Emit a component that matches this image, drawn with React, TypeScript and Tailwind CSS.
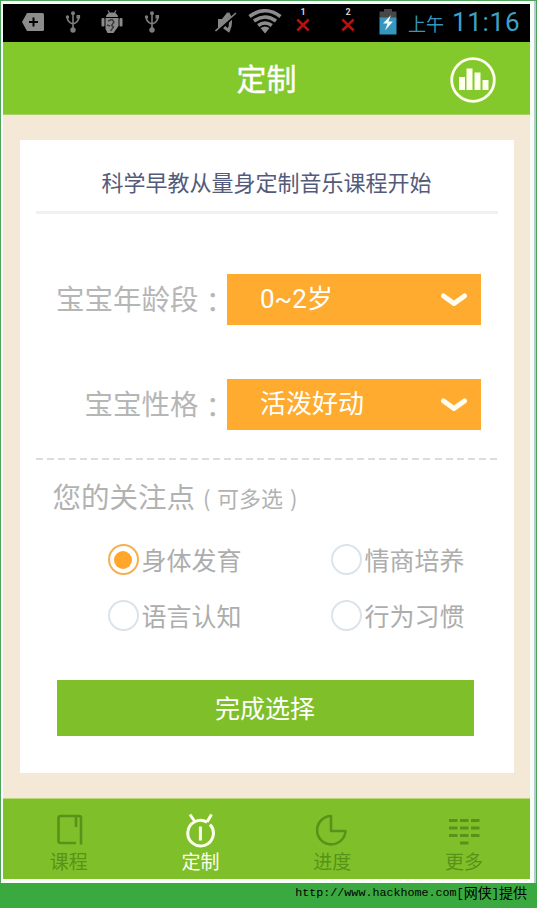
import { useState } from "react"
import type { ReactNode } from "react"

const concerns = ["身体发育", "情商培养", "语言认知", "行为习惯"]

function UsbIcon() {
  return (
    <svg width="16" height="24" viewBox="0 0 16 24" fill="none" stroke="#7d7d7d" strokeWidth="1.6">
      <path d="M8 3v16M2.200 7q0 5 5.800 7 5.800-2 5.800-7" />
      <circle cx="8" cy="3.200" r="2" fill="#7d7d7d" stroke="none" />
      <circle cx="8" cy="20" r="2.700" fill="#7d7d7d" stroke="none" />
      <circle cx="2.500" cy="7" r="1.700" fill="#7d7d7d" stroke="none" />
      <path d="M11.500 5h3.600v3.600h-3.600z" fill="#7d7d7d" stroke="none" />
    </svg>
  )
}

function DebugIcon() {
  return (
    <svg width="22" height="24" viewBox="0 0 22 24" fill="#8a8a8a">
      <path d="M5 7C5.300 3.700 8 2.500 11 2.500S16.700 3.700 17 7z" />
      <path d="M7 0.500l1.500 2.500M15 0.500l-1.500 2.500" stroke="#8a8a8a" strokeWidth="1.200" />
      <path d="M4.500 8h13v8l-5 7H6.500l-2-4z" />
      <rect x="0.500" y="8" width="3" height="8.500" rx="1" />
      <rect x="18.500" y="8" width="3" height="8.500" rx="1" />
      <path d="M7 11l4-1.500 2 2.500-2.500 3.500 2 1.500-3 4M6 15l3 1" stroke="#3c3c3c" strokeWidth="1.500" fill="none" />
    </svg>
  )
}

function NoSim({ slot }: { slot: number }) {
  return (
    <div className="mb-1 flex w-[14px] flex-col items-center">
      <span className="h-[9px] text-[9px] leading-[9px] font-bold text-[#d2d2d2]">{slot}</span>
      <svg width="14" height="14" viewBox="0 0 14 14" className="mt-px" stroke="#b5120f" strokeWidth="2.6">
        <path d="M1.300 1.500l11.400 11M12.700 1.500L1.300 12.500" />
      </svg>
    </div>
  )
}

function StatusBar() {
  return (
    <div className="flex h-[38px] items-center bg-black pb-[3px] pl-[19px] font-[Roboto,'Noto_Sans_CJK_SC',sans-serif]">
      <svg width="22" height="18" viewBox="0 0 22 18">
        <path d="M5 0h15.500q1.500 0 1.500 1.500v15q0 1.500-1.500 1.500H5L0 9z" fill="#8c8c8c" />
        <path d="M11.500 4.500v9M7 9h9" stroke="#000" strokeWidth="2" />
      </svg>
      <div className="ml-[21px]"><UsbIcon /></div>
      <div className="ml-[20px]"><DebugIcon /></div>
      <div className="ml-[21px]"><UsbIcon /></div>
      <svg width="22" height="24" viewBox="0 0 22 24" className="ml-[55px]" fill="#858585">
        <path d="M3 9h4l5.500-7L14 9l-7 9H3z" />
        <path d="M13 3q5 8 0.500 17.500L9 17" fill="none" stroke="#858585" strokeWidth="3" />
        <path d="M1 22.500L21.500 4" stroke="#000" strokeWidth="2.500" />
        <path d="M0.500 21L21 3" stroke="#858585" strokeWidth="1.600" />
      </svg>
      <svg width="34" height="25" viewBox="0 0 34 25" className="ml-[11px]" fill="none" stroke="#8c8c8c" strokeWidth="3.600">
        <path d="M1.500 7.500Q17-4 32.500 7.500M6 12Q17 4 28 12M10.200 16.500Q17 11.500 23.800 16.500" />
        <path d="M12.500 19Q17 15.800 21.500 19L17 24.500z" fill="#8c8c8c" stroke="none" />
      </svg>
      <div className="ml-[14px]"><NoSim slot={1} /></div>
      <div className="ml-[31px]"><NoSim slot={2} /></div>
      <svg width="18" height="26" viewBox="0 0 18 26" className="ml-[24px]">
        <path d="M5 0h8v2.500h4.500V9H0.500V2.500H5z" fill="#474747" />
        <path d="M0.500 8.500h17V25.500H0.500z" fill="#3597be" />
        <path d="M12 6L4 14.500h4.500L6 21.500 14 12.500H9.500z" fill="#f2f8f8" />
      </svg>
      <span className="mt-1.5 ml-[11px] text-[18px] leading-none text-[#3597be]">上午</span>
      <span className="ml-[8px] text-[26px] leading-none tracking-[0.7px] text-[#3fa0c6]">11:16</span>
    </div>
  )
}

function Header() {
  return (
    <header className="grid h-[73px] grid-cols-[1fr_auto_1fr] items-center border-b border-[#a9cf6a] bg-[#84c92b]">
      <span />
      <h1 className="mb-[3px] text-[30px] leading-none font-normal text-white [-webkit-text-stroke:0.4px_white]">定制</h1>
      <svg width="46" height="46" viewBox="0 0 46 46" className="mt-[4px] mr-[34px] justify-self-end" fill="#fffff0">
        <circle cx="23" cy="23" r="21.300" fill="none" stroke="#fffff0" strokeWidth="2.800" />
        <path d="M9 20h6v13H9zM16.500 11.500h6V33h-6zM24.500 15.500h6V33h-6zM32.500 23h6v10h-6z" />
      </svg>
    </header>
  )
}

function SelectRow({ label, value }: { label: string; value: string }) {
  return (
    <div className="flex h-[51px] items-center justify-end pr-[33px]">
      <span className="flex text-[28.5px] leading-none text-[#b6b6b6]">
        {label}
        <span className="pt-[3px] font-['Noto_Sans_CJK_TC']" lang="zh-TW">：</span>
      </span>
      <button className="flex h-full w-[253.5px] items-center justify-between bg-[#ffab30] pr-[14px] pl-[33px] font-[Roboto,'Noto_Sans_CJK_SC',sans-serif] text-white">
        <span className="mb-[2px] text-[26px] leading-none">{value}</span>
        <svg width="26" height="14" viewBox="0 0 26 14" fill="none" stroke="#fffdf0" strokeWidth="5">
          <path d="M2.500 3L13 10.500 23.500 3" strokeLinejoin="round" strokeLinecap="round" />
        </svg>
      </button>
    </div>
  )
}

function Concern({ label, checked, onToggle }: { label: string; checked: boolean; onToggle: () => void }) {
  return (
    <button onClick={onToggle} className="flex h-[31px] items-center gap-[3px]">
      <span
        className={`flex size-[31px] items-center justify-center rounded-full border-2 ${
          checked ? "border-[#f5b050]" : "border-[#dbe3eb]"
        }`}
      >
        {checked && <span className="size-[18px] rounded-full bg-[#ffa62b]" />}
      </span>
      <span className="text-[25px] leading-none text-[#adadad]">{label}</span>
    </button>
  )
}

function NavItem({ label, active, children }: { label: string; active?: boolean; children: ReactNode }) {
  return (
    <div className={`flex flex-1 flex-col items-center pt-3 ${active ? "text-[#fffff0]" : "text-[#589218]"}`}>
      <svg width="36" height="38" viewBox="0 0 36 38" fill="none" stroke="currentColor" strokeWidth="3">
        {children}
      </svg>
      <span className="mt-[2px] text-[19px] leading-none">{label}</span>
    </div>
  )
}

function BottomNav() {
  return (
    <nav className="flex h-[81px] border-t border-[#b8d878] bg-[#7fc02a]">
      <NavItem label="课程">
        <path d="M25 32H9.500q-2 0-2-2V7q0-2 2-2H28q2 0 2 2v26.500M25 5v11" strokeWidth="2.600" />
      </NavItem>
      <NavItem label="定制" active>
        <path d="M27 13.500A12.800 12.800 0 1 1 24 11.100M11.800 10.500L7 3.500M24 11.100l4.500-7.600M17.400 15.500v14" />
      </NavItem>
      <NavItem label="进度">
        <path d="M17 5A14.200 14.200 0 1 0 31.500 20H17z" strokeWidth="2.600" strokeLinejoin="round" />
      </NavItem>
      <NavItem label="更多">
        <path d="M3 9.500h8.500M14 9.500h8.500M25 9.500h8.500M3 17h8.500M14 17h8.500M25 17h8.500M3 24.500h8.500M14 24.500h8.500M25 24.500h8.500M14 32h8.500" />
      </NavItem>
    </nav>
  )
}

export default function App() {
  const [selected, setSelected] = useState(["身体发育"])

  const toggle = (name: string) =>
    setSelected((prev) => (prev.includes(name) ? prev.filter((n) => n !== name) : [...prev, name]))

  return (
    <div className="flex h-[908px] w-[537px] flex-col bg-[#3aaa40] font-['Noto_Sans_CJK_SC',sans-serif]">
      <div className="flex h-[883px] border border-b-0 border-[#4fa35a] bg-[#f8fff8] pt-[3px] pr-[5px] pb-1 pl-[2px] shadow-[inset_-2px_0_0_#b9cbd0]">
        <div className="flex w-[527px] flex-col">
          <StatusBar />
          <Header />
          <main className="flex-1 bg-[#f4e9d6] pt-[25px] pr-[16.5px] pl-[16.5px]">
            <section className="h-[633px] bg-white">
              <div className="mx-4 flex h-[74px] items-center justify-center border-b-[3px] border-[#f0f0f0] pt-[10px]">
                <h2 className="text-[22px] leading-none text-[#525b7b]">科学早教从量身定制音乐课程开始</h2>
              </div>

              <div className="flex flex-col gap-[54px] pt-[60px]">
                <SelectRow label="宝宝年龄段" value="0~2岁" />
                <SelectRow label="宝宝性格" value="活泼好动" />
              </div>

              <div className="mx-4 mt-[28px] h-[2px] bg-[repeating-linear-gradient(90deg,#dcdcdc_0_7px,transparent_7px_11.07px)]" />

              <div className="mt-[21px] flex h-[31px] items-center pl-[33px] leading-none text-[#b2b2b2]">
                <span className="text-[28.5px]">您的关注点</span>
                <span className="flex pl-[8px] text-[22px]">
                  <span className="w-[14px]">(</span>可多选<span className="pl-[7px]">)</span>
                </span>
              </div>

              <div className="mt-[32px] grid grid-cols-[223px_auto] gap-y-[25px] pl-[88px]">
                {concerns.map((name) => (
                  <Concern key={name} label={name} checked={selected.includes(name)} onToggle={() => toggle(name)} />
                ))}
              </div>

              <button className="mt-[49px] ml-[37px] flex h-[56px] w-[417px] items-center justify-center bg-[#7fc02a] pb-[2px] text-[25px] leading-none text-white">
                完成选择
              </button>
            </section>
          </main>
          <BottomNav />
        </div>
      </div>
      <footer className="flex h-[25px] items-center justify-end pr-[10px] pb-1 font-['Liberation_Mono','Noto_Sans_CJK_SC',monospace] leading-none text-black">
        <span className="text-[11.7px]">http://www.hackhome.com</span>
        <span className="flex items-center text-[14px]">
          <span className="text-[12px]">[</span>网侠<span className="text-[12px]">]</span>提供
        </span>
      </footer>
    </div>
  )
}
